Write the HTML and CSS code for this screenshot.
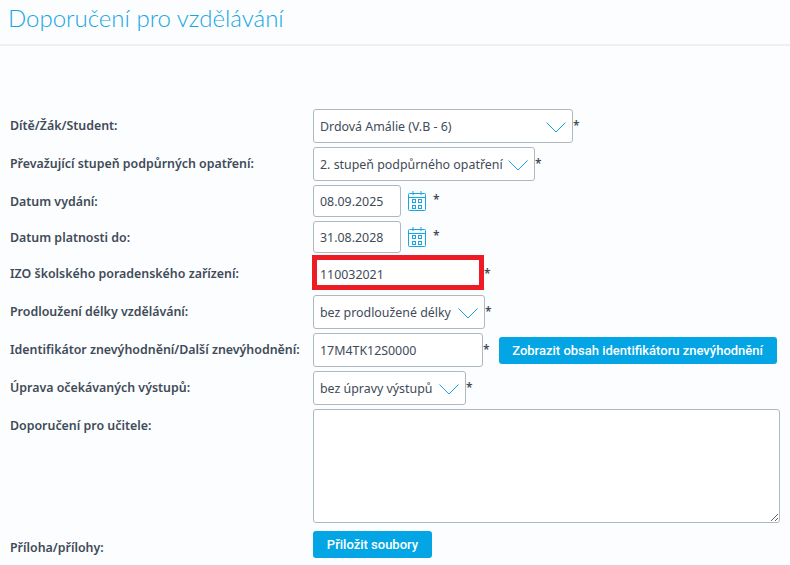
FILE: index.html
```html
<!DOCTYPE html>
<html lang="cs">
<head>
  <meta charset="UTF-8" />
  <title>Doporučení pro vzdělávání</title>
  <link rel="stylesheet" href="styles.css">
</head>
<body>
  <header class="page-head">
    <h1>Doporučení pro vzdělávání</h1>
  </header>

  <form class="form">
    <div class="row">
      <label>Dítě/Žák/Student:</label>
      <div class="select-wrap w-child">
        <select><option>Drdová Amálie (V.B - 6)</option></select>
        <svg class="chevron" viewBox="0 0 20 11"><path d="M0.5 0.5 L10 10 L19.5 0.5" /></svg>
      </div>
      <span class="req">*</span>
    </div>

    <div class="row">
      <label>Převažující stupeň podpůrných opatření:</label>
      <div class="select-wrap w-level">
        <select><option>2. stupeň podpůrného opatření</option></select>
        <svg class="chevron" viewBox="0 0 20 11"><path d="M0.5 0.5 L10 10 L19.5 0.5" /></svg>
      </div>
      <span class="req">*</span>
    </div>

    <div class="row row-date">
      <label>Datum vydání:</label>
      <input class="date" type="text" value="08.09.2025">
      <svg class="cal" viewBox="0 0 18 20">
        <rect x="0.5" y="2.5" width="17" height="17" rx="1" />
        <path d="M0.5 6.5 H17.5 M5 0 V4 M13 0 V4" />
        <rect x="4.5" y="8.5" width="3" height="3" />
        <rect x="10.5" y="8.5" width="3" height="3" />
        <rect x="4.5" y="14.5" width="3" height="3" />
        <rect x="10.5" y="14.5" width="3" height="3" />
      </svg>
      <span class="req">*</span>
    </div>

    <div class="row row-date">
      <label>Datum platnosti do:</label>
      <input class="date" type="text" value="31.08.2028">
      <svg class="cal" viewBox="0 0 18 20">
        <rect x="0.5" y="2.5" width="17" height="17" rx="1" />
        <path d="M0.5 6.5 H17.5 M5 0 V4 M13 0 V4" />
        <rect x="4.5" y="8.5" width="3" height="3" />
        <rect x="10.5" y="8.5" width="3" height="3" />
        <rect x="4.5" y="14.5" width="3" height="3" />
        <rect x="10.5" y="14.5" width="3" height="3" />
      </svg>
      <span class="req">*</span>
    </div>

    <div class="row row-marked">
      <label>IZO školského poradenského zařízení:</label>
      <input class="marked" type="text" value="110032021">
      <span class="req">*</span>
    </div>

    <div class="row">
      <label>Prodloužení délky vzdělávání:</label>
      <div class="select-wrap w-length">
        <select><option>bez prodloužené délky</option></select>
        <svg class="chevron" viewBox="0 0 20 11"><path d="M0.5 0.5 L10 10 L19.5 0.5" /></svg>
      </div>
      <span class="req">*</span>
    </div>

    <div class="row">
      <label>Identifikátor znevýhodnění/Další znevýhodnění:</label>
      <input class="ident" type="text" value="17M4TK12S0000">
      <span class="req">*</span>
      <button class="btn btn-ident" type="button">Zobrazit obsah identifikátoru znevýhodnění</button>
    </div>

    <div class="row">
      <label>Úprava očekávaných výstupů:</label>
      <div class="select-wrap w-outcome">
        <select><option>bez úpravy výstupů</option></select>
        <svg class="chevron" viewBox="0 0 20 11"><path d="M0.5 0.5 L10 10 L19.5 0.5" /></svg>
      </div>
      <span class="req">*</span>
    </div>

    <div class="row row-top">
      <label>Doporučení pro učitele:</label>
      <textarea></textarea>
    </div>

    <div class="row row-attach">
      <label>Příloha/přílohy:</label>
      <button class="btn btn-attach" type="button">Přiložit soubory</button>
    </div>
  </form>
</body>
</html>
```

FILE: styles.css
```css
* {
  box-sizing: border-box;
}

body {
  margin: 0;
  background-color: #fbfdfe;
  color: #414b58;
  font-family: "Noto Sans", sans-serif;
  font-size: 13px;
  overflow: hidden;
}

.page-head {
  height: 46px;
  padding-left: 8px;
  border-bottom: 2px solid #eef1f3;
}

h1 {
  margin: 0;
  color: #18a5e2;
  font-family: "Lato", sans-serif;
  font-size: 24px;
  font-weight: 300;
  line-height: 36px;
}

.form {
  display: flex;
  flex-direction: column;
  gap: 4px;
  padding-top: 63px;
}

.row {
  display: flex;
  align-items: center;
}

.row label {
  flex: 0 0 313px;
  padding-bottom: 2px;
  padding-left: 10px;
  font-weight: 600;
  font-size: 12.4px;
  white-space: nowrap;
}

input, select, textarea {
  background-color: #fff;
  border: 1px solid #aeb8c1;
  border-radius: 3px;
  color: #414b58;
  font-family: "Noto Sans", sans-serif;
  font-size: 12.4px;
  outline: none;
}

input, select {
  height: 34px;
  padding: 0 6px;
}

select {
  appearance: none;
  width: 100%;
}

.select-wrap {
  position: relative;
}

.chevron {
  position: absolute;
  top: 13px;
  right: 7px;
  width: 20px;
  height: 11px;
  pointer-events: none;
}

.chevron path {
  fill: none;
  stroke: #18a5e2;
  stroke-width: 1;
}

.w-child { width: 260px; }
.w-level { width: 222px; }
.w-length { width: 172px; }
.w-outcome { width: 153px; }

.req {
  align-self: flex-start;
  height: 16px;
  font-size: 12px;
  font-weight: 600;
  line-height: 34px;
}

.row-date label {
  padding-bottom: 0;
}

.row-date .req {
  margin-left: 7px;
  line-height: 30px;
}

input.date {
  width: 88px;
  height: 32px;
}

.cal {
  width: 18px;
  height: 20px;
  margin-left: 7px;
  fill: none;
  stroke: #18a5e2;
  stroke-width: 1;
}

.row-marked {
  margin-top: -2px;
  margin-bottom: 1px;
}

.row-marked label {
  flex-basis: 312px;
  padding-bottom: 0;
  padding-top: 2px;
}

.row-marked .req {
  line-height: 38px;
}

input.marked {
  width: 172px;
  height: 35px;
  padding: 4px 3px 0;
  border: 5px solid #ed1c24;
  border-radius: 0;
}

input.ident {
  width: 170px;
}

.btn {
  height: 27px;
  padding: 0;
  border: none;
  border-radius: 3px;
  background-color: #03a5e4;
  color: #fff;
  font-family: "Roboto", sans-serif;
  font-size: 13px;
  font-weight: 500;
  white-space: nowrap;
}

.btn-ident {
  width: 278px;
  margin-left: 9px;
}

.row-top {
  align-items: flex-start;
}

.row-top label {
  padding-top: 8px;
}

textarea {
  display: block;
  width: 467px;
  height: 114px;
}

.row-attach {
  margin-top: 4px;
}

.row-attach label {
  padding-top: 8px;
}

.btn-attach {
  width: 119px;
}
```
